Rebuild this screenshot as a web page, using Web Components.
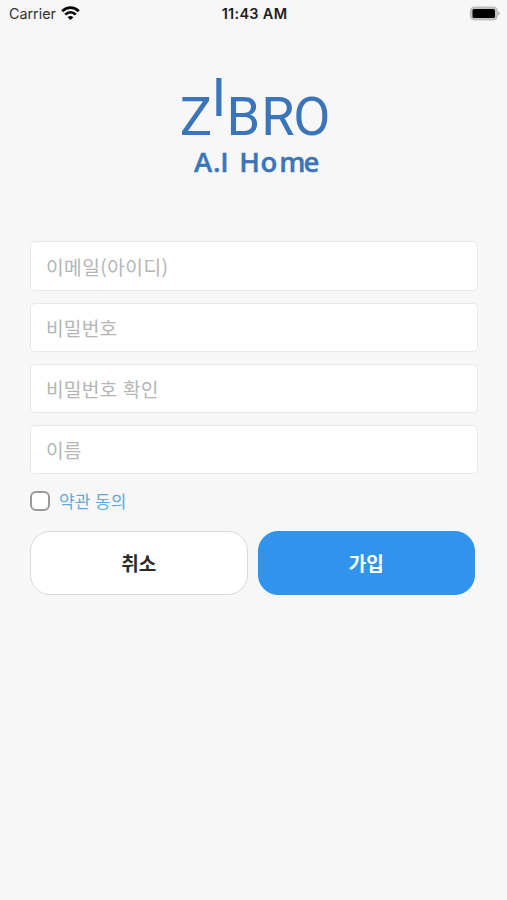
<!DOCTYPE html>
<html lang="ko">
<head>
<meta charset="utf-8">
<title>ZIBRO A.I Home</title>
<style>
html,body{margin:0;height:100%;background:#f7f7f7}
body{font-family:"Noto Sans CJK KR",sans-serif}
</style>
</head>
<body>
<signup-page></signup-page>
<script>
const define = (name, html) => {
  const t = document.createElement('template');
  t.innerHTML = html;
  customElements.define(name, class extends HTMLElement {
    constructor() {
      super();
      this.attachShadow({mode: 'open'}).append(t.content.cloneNode(true));
    }
  });
};

define('status-bar', `
<style>
:host{display:grid;grid-template-columns:1fr auto 1fr;align-items:center;height:27px;padding:0 7px 0 9px;box-sizing:border-box;font:14.3px/27px Inter,sans-serif;color:#303030}
.left{display:flex;align-items:center;gap:5.5px}
.time{font-weight:600;font-size:14.5px;color:#1c1c1c;letter-spacing:.3px}
svg{display:block}
.battery{justify-self:end}
</style>
<div class="left"><span>Carrier</span>
<svg width="19" height="15" viewBox="0 0 19 15" fill="none" stroke="#080808" stroke-width="2.7"><path d="M1.2 5.2C6 .5 13 .5 17.8 5.2M4.2 8.6c3.1-3 7.5-3 10.6 0"/><path d="M9.5 14L6.6 11.2q2.9-2.6 5.8 0z" fill="#080808" stroke="none"/></svg></div>
<span class="time">11:43 AM</span>
<svg class="battery" width="31" height="15" viewBox="0 0 31 15"><rect x="1.4" y="1.1" width="27" height="12.8" rx="4" fill="#c4c4c4" stroke="#b8b8b8"/><rect x="3.5" y="3" width="22.5" height="9" rx="1.6" fill="#000"/><path d="M29.3 5.2q3 2.2 0 4.4z" fill="#aaa"/></svg>`);

define('brand-logo', `
<style>:host{display:block;height:110px}svg{display:block;margin:0 auto;overflow:visible}</style>
<svg width="160" height="110" viewBox="174 70 160 110" fill="#3b75b9">
<text x="179.8 211.5 226.6 261.2 293.2" y="135 115.5 135 135 135" font-family="Roboto,sans-serif" font-size="54">ZIBRO</text>
<text x="194 213 220.2 228 239.2 260.6 279.2 303.6" y="172" font-family="'Open Sans',sans-serif" font-weight="600" font-size="27.5" stroke="#3b75b9" stroke-width=".4">A.I Home</text>
</svg>`);

define('text-field', `
<style>
:host{display:flex;align-items:center;height:49px;box-sizing:border-box;border:1px solid #e8e8e8;border-radius:5px;background:#fff;padding:0 15px;color:#b5b5b5;font-size:19.2px;letter-spacing:.2px;line-height:28px}
</style><span><slot></slot></span>`);

define('check-option', `
<style>
:host{display:flex;align-items:center;gap:9px;height:21px;color:#68a8db;font-size:17px;line-height:21px}
i{width:20px;height:20px;box-sizing:border-box;border:2px solid #999;border-radius:6px;background:#fff}
</style><i></i><span><slot></slot></span>`);

define('pill-button', `
<style>
:host{display:flex;align-items:center;justify-content:center;height:64px;box-sizing:border-box;border:1.5px solid #d9d9d9;border-radius:20px;background:#fff;color:#2b2b2b;font-size:19px;font-weight:700;line-height:28px}
:host([primary]){background:#3194ec;border-color:#3194ec;color:#fff}
</style><span><slot></slot></span>`);

define('signup-page', `
<style>
:host{display:block;width:507px;height:900px;overflow:hidden;background:#f7f7f7}
brand-logo{margin-top:43px}
.fields{display:grid;gap:12px;margin:62px 29px 0 30px}
.fields text-field:first-child{height:50px;margin-top:-1px;padding-top:2px;letter-spacing:.45px}
check-option{margin:16px 30px 0}
.actions{display:grid;grid-template-columns:217.5px 217.5px;gap:10px;margin:20px 30px 0}
</style>
<status-bar></status-bar>
<brand-logo></brand-logo>
<div class="fields">
<text-field>이메일(아이디)</text-field>
<text-field>비밀번호</text-field>
<text-field>비밀번호 확인</text-field>
<text-field>이름</text-field>
</div>
<check-option>약관 동의</check-option>
<div class="actions"><pill-button>취소</pill-button><pill-button primary>가입</pill-button></div>`);
</script>
</body>
</html>
